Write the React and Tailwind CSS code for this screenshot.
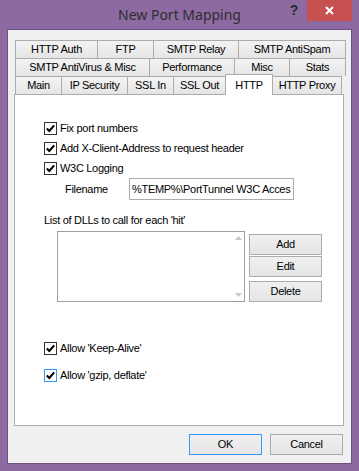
import React from 'react';

const FONT = { fontFamily: '"Liberation Sans", Arial, sans-serif' };

const tabRows = [
  [
    { label: 'HTTP Auth', w: 'w-[83px]' },
    { label: 'FTP', w: 'w-[57px]' },
    { label: 'SMTP Relay', w: 'w-[86px]' },
    { label: 'SMTP AntiSpam', w: 'w-[108px]' },
  ],
  [
    { label: 'SMTP AntiVirus & Misc', w: 'w-[135px]' },
    { label: 'Performance', w: 'w-[86px]' },
    { label: 'Misc', w: 'w-[56px]' },
    { label: 'Stats', w: 'w-[57px]' },
  ],
];

const bottomRow = [
  { label: 'Main', w: 'w-[47px]' },
  { label: 'IP Security', w: 'w-[67px]' },
  { label: 'SSL In', w: 'w-[47px]' },
  { label: 'SSL Out', w: 'w-[53px]' },
  { label: 'HTTP', w: 'w-[48px]', active: true },
  { label: 'HTTP Proxy', w: 'w-[70px]' },
];

const Tab = ({ label, w, first }) => (
  <div
    className={`${w} h-[18px] ${first ? '' : '-ml-px'} flex items-center justify-center border-t border-l border-r border-[#acacac] bg-linear-to-b from-[#f3f3f3] to-[#e5e5e5] text-[11px] tracking-[-0.3px] text-black whitespace-nowrap`}
  >
    {label}
  </div>
);

const Checkbox = ({ focused }) => (
  <div
    className={`w-[13px] h-[13px] shrink-0 flex items-center justify-center bg-white border ${
      focused ? 'border-[#3399ff]' : 'border-[#333333]'
    }`}
  >
    <svg width="11" height="11" viewBox="0 0 11 11">
      <path d="M1.8 5.4 L4.3 7.9 L9.2 2.4" fill="none" stroke="#000" strokeWidth="2.1" />
    </svg>
  </div>
);

const CheckRow = ({ label, focused, className = '' }) => (
  <div className={`h-[20px] flex items-center gap-[3px] pl-[29px] ${className}`}>
    <Checkbox focused={focused} />
    <span className="text-[11px] tracking-[-0.3px] text-black whitespace-nowrap">{label}</span>
  </div>
);

const Button = ({ label, className = '', primary }) => (
  <div
    className={`flex items-center justify-center border ${
      primary ? 'border-[#3399ff]' : 'border-[#acacac]'
    } bg-linear-to-b from-[#f0f0f0] to-[#e5e5e5] text-[11px] tracking-[-0.3px] text-black ${className}`}
  >
    {label}
  </div>
);

export default function App() {
  return (
    <div className="w-[359px] h-[471px] bg-[#8d6aa2] flex flex-col" style={FONT}>
      {/* Barra de título */}
      <div className="h-[29px] grid grid-cols-[1fr_auto_1fr]">
        <div />
        <div
          className="flex items-center text-[14px] text-[#2e2e2e]"
          style={{ fontFamily: '"Noto Sans", "Open Sans", sans-serif' }}
        >
          New Port Mapping
        </div>
        <div className="flex justify-end items-start pr-[7px]">
          <div className="w-[26px] h-[21px] flex items-center justify-center text-[14px] font-bold text-[#2b2b2b]">
            ?
          </div>
          <div className="w-[45px] h-[21px] bg-[#c75050] flex items-center justify-center">
            <svg width="9" height="9" viewBox="0 0 9 9">
              <path d="M1 1 L8 8 M8 1 L1 8" stroke="#fff" strokeWidth="2" />
            </svg>
          </div>
        </div>
      </div>

      {/* Área cliente */}
      <div className="mx-[7px] mb-[7px] flex-1 border border-[#6f5182] bg-[#f0f0f0] flex flex-col">
        <div className="pt-[10px] pl-[6px]">
          {tabRows.map((row, i) => (
            <div key={i} className="flex pl-[1px]">
              {row.map((t, j) => (
                <Tab key={t.label} {...t} first={j === 0} />
              ))}
            </div>
          ))}
          <div className="flex items-end h-[18px] pl-[1px]">
            {bottomRow.map((t, j) =>
              t.active ? (
                <div
                  key={t.label}
                  className={`${t.w} h-[21px] -ml-px -mb-px relative z-10 flex items-start pt-[2px] justify-center border-t border-l border-r border-[#acacac] bg-white text-[11px] tracking-[-0.3px] text-black`}
                >
                  {t.label}
                </div>
              ) : (
                <Tab key={t.label} {...t} first={j === 0} />
              )
            )}
          </div>

          {/* Panel de la pestaña HTTP */}
          <div className="w-[330px] h-[332px] border border-[#adadad] bg-white text-[11px] tracking-[-0.3px] text-black">
            <div className="pt-[23px]">
              <CheckRow label="Fix port numbers" />
              <CheckRow label="Add X-Client-Address to request header" />
              <CheckRow label="W3C Logging" />

              <div className="h-[22px] flex items-center pl-[50px]">
                <span className="w-[64px]">Filename</span>
                <div className="w-[165px] h-[22px] border border-[#abadb3] bg-white flex items-center pl-[2px] overflow-hidden whitespace-nowrap">
                  %TEMP%\PortTunnel W3C Acces
                </div>
              </div>

              <div className="h-[18px] mt-[11px] flex items-center pl-[29px]">
                List of DLLs to call for each 'hit'
              </div>

              <div className="mt-[2px] flex pl-[42px] gap-[4px]">
                <div className="w-[188px] h-[71px] border border-[#a0a0a0] bg-white flex justify-end">
                  <div className="w-[12px] flex flex-col justify-between items-center py-[4px]">
                    <svg width="7" height="4" viewBox="0 0 7 4">
                      <path d="M0 4 L3.5 0 L7 4 Z" fill="#c8c8c8" />
                    </svg>
                    <svg width="7" height="4" viewBox="0 0 7 4">
                      <path d="M0 0 L3.5 4 L7 0 Z" fill="#c8c8c8" />
                    </svg>
                  </div>
                </div>
                <div className="flex flex-col pt-[3px]">
                  <Button label="Add" className="w-[73px] h-[21px]" />
                  <Button label="Edit" className="w-[73px] h-[21px] mt-[1px]" />
                  <Button label="Delete" className="w-[73px] h-[21px] mt-[4px]" />
                </div>
              </div>

              <CheckRow label="Allow 'Keep-Alive'" className="mt-[36px]" />
              <CheckRow label="Allow 'gzip, deflate'" focused className="mt-[7px]" />
            </div>
          </div>
        </div>

        <div className="flex justify-end gap-[8px] pr-[8px] mt-[8px]">
          <Button label="OK" primary className="w-[73px] h-[21px]" />
          <Button label="Cancel" className="w-[73px] h-[21px]" />
        </div>
      </div>
    </div>
  );
}
